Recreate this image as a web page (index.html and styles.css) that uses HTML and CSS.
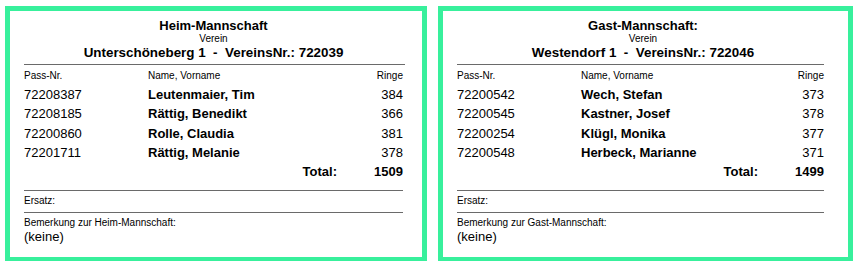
FILE: index.html
```html
<!DOCTYPE html>
<html lang="de">
<head>
<meta charset="utf-8">
<title>Mannschaften</title>
<link rel="stylesheet" href="styles.css">
</head>
<body>
<div class="page">
  <section class="box">
    <header class="head">
      <div class="title">Heim-Mannschaft</div>
      <div class="small">Verein</div>
      <div class="club">Unterschöneberg 1&nbsp; -&nbsp; VereinsNr.: 722039</div>
    </header>
    <div class="sheet">
      <hr class="rule rule--head">
      <div class="grid">
        <div class="small">Pass-Nr.</div><div class="small">Name, Vorname</div><div class="small num">Ringe</div>
      </div>
      <div class="grid rows">
        <div>72208387</div><div class="b">Leutenmaier, Tim</div><div class="num">384</div>
        <div>72208185</div><div class="b">Rättig, Benedikt</div><div class="num">366</div>
        <div>72200860</div><div class="b">Rolle, Claudia</div><div class="num">381</div>
        <div>72201711</div><div class="b">Rättig, Melanie</div><div class="num">378</div>
        <div></div><div class="b num">Total:</div><div class="b num">1509</div>
      </div>
      <hr class="rule rule--sum">
      <div class="small note">Ersatz:</div>
      <hr class="rule">
      <div class="small note">Bemerkung zur Heim-Mannschaft:</div>
      <div class="remark">(keine)</div>
    </div>
  </section>
  <section class="box box--guest">
    <header class="head">
      <div class="title">Gast-Mannschaft:</div>
      <div class="small">Verein</div>
      <div class="club">Westendorf 1&nbsp; -&nbsp; VereinsNr.: 722046</div>
    </header>
    <div class="sheet">
      <hr class="rule rule--head">
      <div class="grid">
        <div class="small">Pass-Nr.</div><div class="small">Name, Vorname</div><div class="small num">Ringe</div>
      </div>
      <div class="grid rows">
        <div>72200542</div><div class="b">Wech, Stefan</div><div class="num">373</div>
        <div>72200545</div><div class="b">Kastner, Josef</div><div class="num">378</div>
        <div>72200254</div><div class="b">Klügl, Monika</div><div class="num">377</div>
        <div>72200548</div><div class="b">Herbeck, Marianne</div><div class="num">371</div>
        <div></div><div class="b num">Total:</div><div class="b num">1499</div>
      </div>
      <hr class="rule rule--sum">
      <div class="small note">Ersatz:</div>
      <hr class="rule">
      <div class="small note">Bemerkung zur Gast-Mannschaft:</div>
      <div class="remark">(keine)</div>
    </div>
  </section>
</div>
</body>
</html>
```
FILE: styles.css
```css
html, body {
  margin: 0;
  padding: 0;
  background: #ffffff;
}
body {
  font-family: "Liberation Sans", Arial, sans-serif;
  color: #000;
  font-size: 13px;
}
.page {
  display: grid;
  grid-template-columns: 422px 415px;
  column-gap: 11px;
  padding: 6px 4px 6px 5px;
}
.box {
  border: 5px solid #38f09c;
  background: #fff;
  height: 239px;
  padding: 7px 19px 0 14px;
}
.box--guest .sheet {
  margin-right: 5px;
}
.head {
  text-align: center;
}
.title {
  font-weight: bold;
  font-size: 13px;
  line-height: 15px;
}
.small {
  font-size: 10px;
  line-height: 12px;
}
.club {
  font-weight: bold;
  font-size: 13.4px;
  line-height: 15px;
}
.rule {
  border: 0;
  border-top: 1px solid #6a6a6a;
  margin: 4px 0 0 0;
  height: 0;
}
.rule--head {
  margin-top: 4px;
  margin-right: -2px;
}
.box--guest .rule--head { margin-right: 0; }
.grid {
  display: grid;
  grid-template-columns: 124px 1fr 66px;
}
.rule--head + .grid {
  margin-top: 5px;
}
.rows {
  margin-top: 3px;
  line-height: 19.25px;
}
.num {
  text-align: right;
}
.b {
  font-weight: bold;
}
.rule--sum {
  margin-top: 9px;
}
.note {
  margin: 4px 0 5px 0;
}
.note + .remark {
  margin-top: -5px;
}
.remark {
  font-size: 13px;
  line-height: 15px;
}
```
